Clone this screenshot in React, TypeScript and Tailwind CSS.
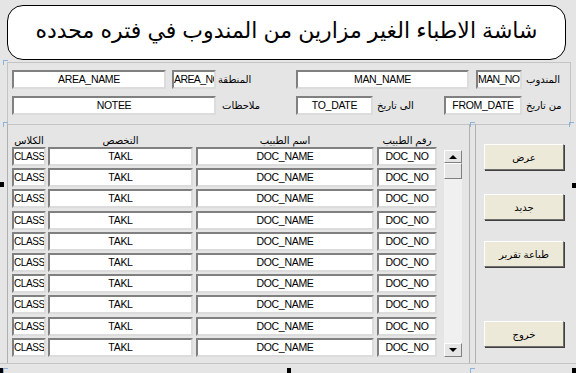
const rows = Array.from({ length: 10 }, (_, i) => i);

const font = { fontFamily: '"Liberation Sans", "DejaVu Sans", sans-serif' };

function Field({
  text,
  className = "",
  align = "center",
}: {
  text: string;
  className?: string;
  align?: "center" | "left";
}) {
  return (
    <div
      className={`h-[19px] shrink-0 overflow-hidden whitespace-nowrap bg-white border-2 border-t-[#808080] border-l-[#808080] border-b-[#dcdcdc] border-r-[#dcdcdc] text-[10.5px] leading-[15px] text-black ${
        align === "center" ? "text-center" : "text-left"
      } ${className}`}
    >
      {text}
    </div>
  );
}

function Label({ text, className = "" }: { text: string; className?: string }) {
  return (
    <div dir="rtl" className={`shrink-0 whitespace-nowrap text-[10px] leading-[19px] text-black text-left ${className}`}>
      {text}
    </div>
  );
}

function FormButton({ text, className = "" }: { text: string; className?: string }) {
  return (
    <button
      dir="rtl"
      className={`w-[80px] h-[26px] bg-[#ece9d8] border border-t-white border-l-white border-b-[#6e6e6e] border-r-[#6e6e6e] shadow-[1px_1px_0_#404040] text-[10px] text-black ${className}`}
    >
      {text}
    </button>
  );
}

function Handle({ className }: { className: string }) {
  return <div className={`absolute w-[4px] h-[5px] bg-black ${className}`} />;
}

function Tick({ className }: { className: string }) {
  return (
    <div className={`absolute w-[5px] h-[5px] border-l border-t border-[#8ab4dc] ${className}`} />
  );
}

export default function App() {
  return (
    <div style={font} className="relative w-[576px] h-[373px] overflow-hidden bg-[#e5e5e5] pt-[5px]">
      {/* title */}
      <div className="ml-[7px] w-[559px] h-[55px] rounded-[16px] border border-black bg-white flex items-center justify-center">
        <div dir="rtl" className="whitespace-nowrap text-[22px] leading-none text-black pb-[4px]">
          شاشة الاطباء الغير مزارين من المندوب في فتره محدده
        </div>
      </div>

      {/* header section */}
      <div className="mt-[2px] ml-[7px] w-[564px] h-[63px] border border-[#c4c4c4] pt-[7px] pl-[4px] flex flex-col gap-[7px]">
        <div className="flex">
          <Field text="AREA_NAME" className="w-[154px] tracking-[-0.3px]" />
          <Field text="AREA_NC" align="left" className="w-[44px] ml-[6px] tracking-[-0.6px]" />
          <Label text="المنطقة" className="w-[80px] pl-[2px]" />
          <Field text="MAN_NAME" className="w-[173px] tracking-[-0.3px]" />
          <Field text="MAN_NO" align="left" className="w-[46px] ml-[7px] tracking-[-0.6px]" />
          <Label text="المندوب" className="pl-[4px]" />
        </div>
        <div className="flex">
          <Field text="NOTEE" className="w-[204px] tracking-[-0.3px]" />
          <Label text="ملاحظات" className="w-[80px] pl-[6px]" />
          <Field text="TO_DATE" className="w-[77px] tracking-[-0.3px]" />
          <Label text="الى تاريخ" className="w-[71px] pl-[4px]" />
          <Field text="FROM_DATE" className="w-[78px] tracking-[-0.3px]" />
          <Label text="من تاريخ" className="pl-[4px]" />
        </div>
      </div>

      {/* detail section */}
      <div className="-mt-px flex h-[240px] border-b border-[#c4c4c4]">
        <div className="ml-[7px] w-[463px] border-l border-r border-[#b0b0b0] pl-[4px] pt-[10px] flex">
          <div className="flex flex-col">
            <div dir="ltr" className="flex h-[13px] text-[10px] leading-[13px] text-black whitespace-nowrap">
              <div dir="rtl" className="w-[34px] text-center">الكلاس</div>
              <div dir="rtl" className="w-[145px] ml-[2px] text-center">التخصص</div>
              <div dir="rtl" className="w-[178px] ml-[3px] text-center">اسم الطبيب</div>
              <div dir="rtl" className="w-[60px] ml-[3px] text-center">رقم الطبيب</div>
            </div>
            <div className="flex flex-col gap-[2.2px]">
              {rows.map((r) => (
                <div key={r} className="flex">
                  <Field text="CLASS" align="left" className="w-[34px] text-[10px] tracking-[-0.4px]" />
                  <Field text="TAKL" className="w-[145px] ml-[2px] tracking-[-0.3px]" />
                  <Field text="DOC_NAME" className="w-[178px] ml-[3px] tracking-[-0.3px]" />
                  <Field text="DOC_NO" className="w-[60px] ml-[3px] tracking-[-0.3px]" />
                </div>
              ))}
            </div>
          </div>

          {/* scrollbar */}
          <div className="ml-[7px] mt-[16px] w-[18px] h-[207px] bg-[#f0f0f0] flex flex-col justify-between">
            <div>
              <div className="h-[13px] bg-[#e5e5e5] border border-t-white border-l-white border-b-[#808080] border-r-[#808080] flex items-center justify-center">
                <div className="w-0 h-0 border-l-[4px] border-r-[4px] border-b-[4px] border-l-transparent border-r-transparent border-b-black" />
              </div>
              <div className="h-[16px] bg-[#e5e5e5] border border-t-white border-l-white border-b-[#808080] border-r-[#808080]" />
            </div>
            <div className="h-[14px] bg-[#e5e5e5] border border-t-white border-l-white border-b-[#808080] border-r-[#808080] flex items-center justify-center">
              <div className="w-0 h-0 border-l-[4px] border-r-[4px] border-t-[4px] border-l-transparent border-r-transparent border-t-black" />
            </div>
          </div>
        </div>

        {/* buttons */}
        <div className="ml-[5px] flex-1 border-l border-[#b0b0b0] pl-[8px] pt-[20px] flex flex-col">
          <FormButton text="عرض" />
          <FormButton text="جديد" className="mt-[24px]" />
          <FormButton text="طباعة تقرير" className="mt-[21px]" />
          <FormButton text="خروج" className="mt-[54px]" />
        </div>
      </div>

      {/* design view markers */}
      <Handle className="left-0 top-[182px]" />
      <Handle className="right-0 top-[183px]" />
      <Handle className="left-[287px] bottom-0" />
      <Handle className="left-0 bottom-0" />
      <Handle className="right-0 bottom-0" />
      <Tick className="left-[3px] top-[60px]" />
      <Tick className="left-[3px] top-[122px]" />
      <Tick className="left-[470px] top-[122px]" />
      <Tick className="right-[2px] top-[122px]" />
      <Tick className="left-[470px] bottom-[0px]" />
      <Tick className="left-[3px] bottom-[0px]" />
    </div>
  );
}
